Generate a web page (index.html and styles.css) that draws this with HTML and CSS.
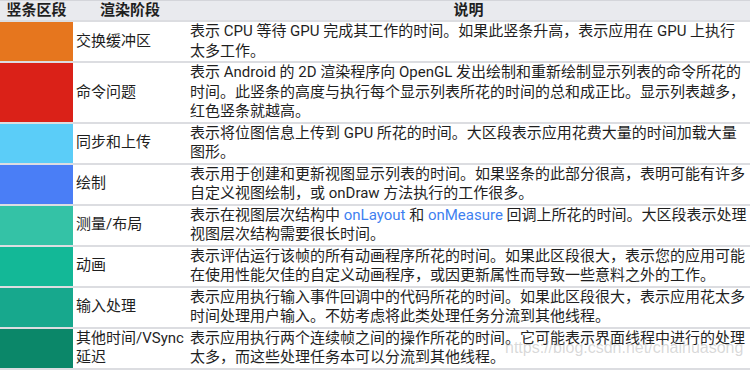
FILE: index.html
```html
<!DOCTYPE html>
<html lang="zh-CN">
<head>
<meta charset="utf-8">
<title>GPU 呈现模式分析</title>
<link rel="stylesheet" href="styles.css">
</head>
<body>
<div class="wrap">
<table class="stages">
  <colgroup>
    <col class="c-bar">
    <col class="c-name">
    <col class="c-desc">
  </colgroup>
  <thead>
    <tr><th>竖条区段</th><th>渲染阶段</th><th>说明</th></tr>
  </thead>
  <tbody>
    <tr>
      <td class="swatch s-swap"></td>
      <td class="name">交换缓冲区</td>
      <td class="desc">表示 CPU 等待 GPU 完成其工作的时间。如果此竖条升高，表示应用在 GPU 上执行<br>太多工作。</td>
    </tr>
    <tr>
      <td class="swatch s-cmd"></td>
      <td class="name">命令问题</td>
      <td class="desc">表示 Android 的 2D 渲染程序向 OpenGL 发出绘制和重新绘制显示列表的命令所花的<br>时间。此竖条的高度与执行每个显示列表所花的时间的总和成正比。显示列表越多，<br>红色竖条就越高。</td>
    </tr>
    <tr>
      <td class="swatch s-sync"></td>
      <td class="name">同步和上传</td>
      <td class="desc">表示将位图信息上传到 GPU 所花的时间。大区段表示应用花费大量的时间加载大量<br>图形。</td>
    </tr>
    <tr>
      <td class="swatch s-draw"></td>
      <td class="name">绘制</td>
      <td class="desc">表示用于创建和更新视图显示列表的时间。如果竖条的此部分很高，表明可能有许多<br>自定义视图绘制，或 onDraw 方法执行的工作很多。</td>
    </tr>
    <tr>
      <td class="swatch s-measure"></td>
      <td class="name">测量/布局</td>
      <td class="desc">表示在视图层次结构中 <a class="code">onLayout</a> 和 <a class="code">onMeasure</a> 回调上所花的时间。大区段表示处理<br>视图层次结构需要很长时间。</td>
    </tr>
    <tr>
      <td class="swatch s-anim"></td>
      <td class="name">动画</td>
      <td class="desc">表示评估运行该帧的所有动画程序所花的时间。如果此区段很大，表示您的应用可能<br>在使用性能欠佳的自定义动画程序，或因更新属性而导致一些意料之外的工作。</td>
    </tr>
    <tr>
      <td class="swatch s-input"></td>
      <td class="name">输入处理</td>
      <td class="desc">表示应用执行输入事件回调中的代码所花的时间。如果此区段很大，表示应用花太多<br>时间处理用户输入。不妨考虑将此类处理任务分流到其他线程。</td>
    </tr>
    <tr>
      <td class="swatch s-other"></td>
      <td class="name">其他时间/VSync<br>延迟</td>
      <td class="desc">表示应用执行两个连续帧之间的操作所花的时间。它可能表示界面线程中进行的处理<br>太多，而这些处理任务本可以分流到其他线程。</td>
    </tr>
  </tbody>
</table>
<div class="watermark">https://blog.csdn.net/chaihuasong</div>
</div>
</body>
</html>
```
FILE: styles.css
```css
html, body {
  margin: 0;
  padding: 0;
  background: #ffffff;
}

.wrap {
  position: relative;
  width: 750px;
  height: 370px;
  overflow: hidden;
}

.stages {
  width: 750px;
  table-layout: fixed;
  border-collapse: collapse;
  font-family: Roboto, "Noto Sans CJK SC", sans-serif;
  font-size: 15px;
  color: #1f1f1f;
  border-top: 1px solid #d4d5da;
  border-bottom: 3px solid #dcdde1;
}

.c-bar { width: 73px; }
.c-name { width: 114px; }

.stages th {
  background: #e9eaee;
  font-weight: bold;
  text-align: center;
  line-height: 19px;
  padding: 0;
  white-space: nowrap;
}

.stages td {
  border-top: 2px solid #dcdde1;
  padding: 0 0 0 3px;
  line-height: 19.5px;
  vertical-align: middle;
  white-space: nowrap;
}

.stages td.swatch { padding: 0; }

.code {
  color: #3f7ff0;
  text-decoration: none;
}

.s-swap { background: #e6761e; }
.s-cmd { background: #da2118; }
.s-sync { background: #5bcdf8; }
.s-draw { background: #4a7ef6; }
.s-measure { background: #34c2a6; }
.s-anim { background: #13b897; }
.s-input { background: #17a88d; }
.s-other { background: #0b8769; }

.watermark {
  position: absolute;
  left: 505px;
  top: 339px;
  font-family: "Liberation Sans", Arial, sans-serif;
  font-size: 16px;
  color: rgba(170, 170, 170, 0.45);
  white-space: nowrap;
}
```
